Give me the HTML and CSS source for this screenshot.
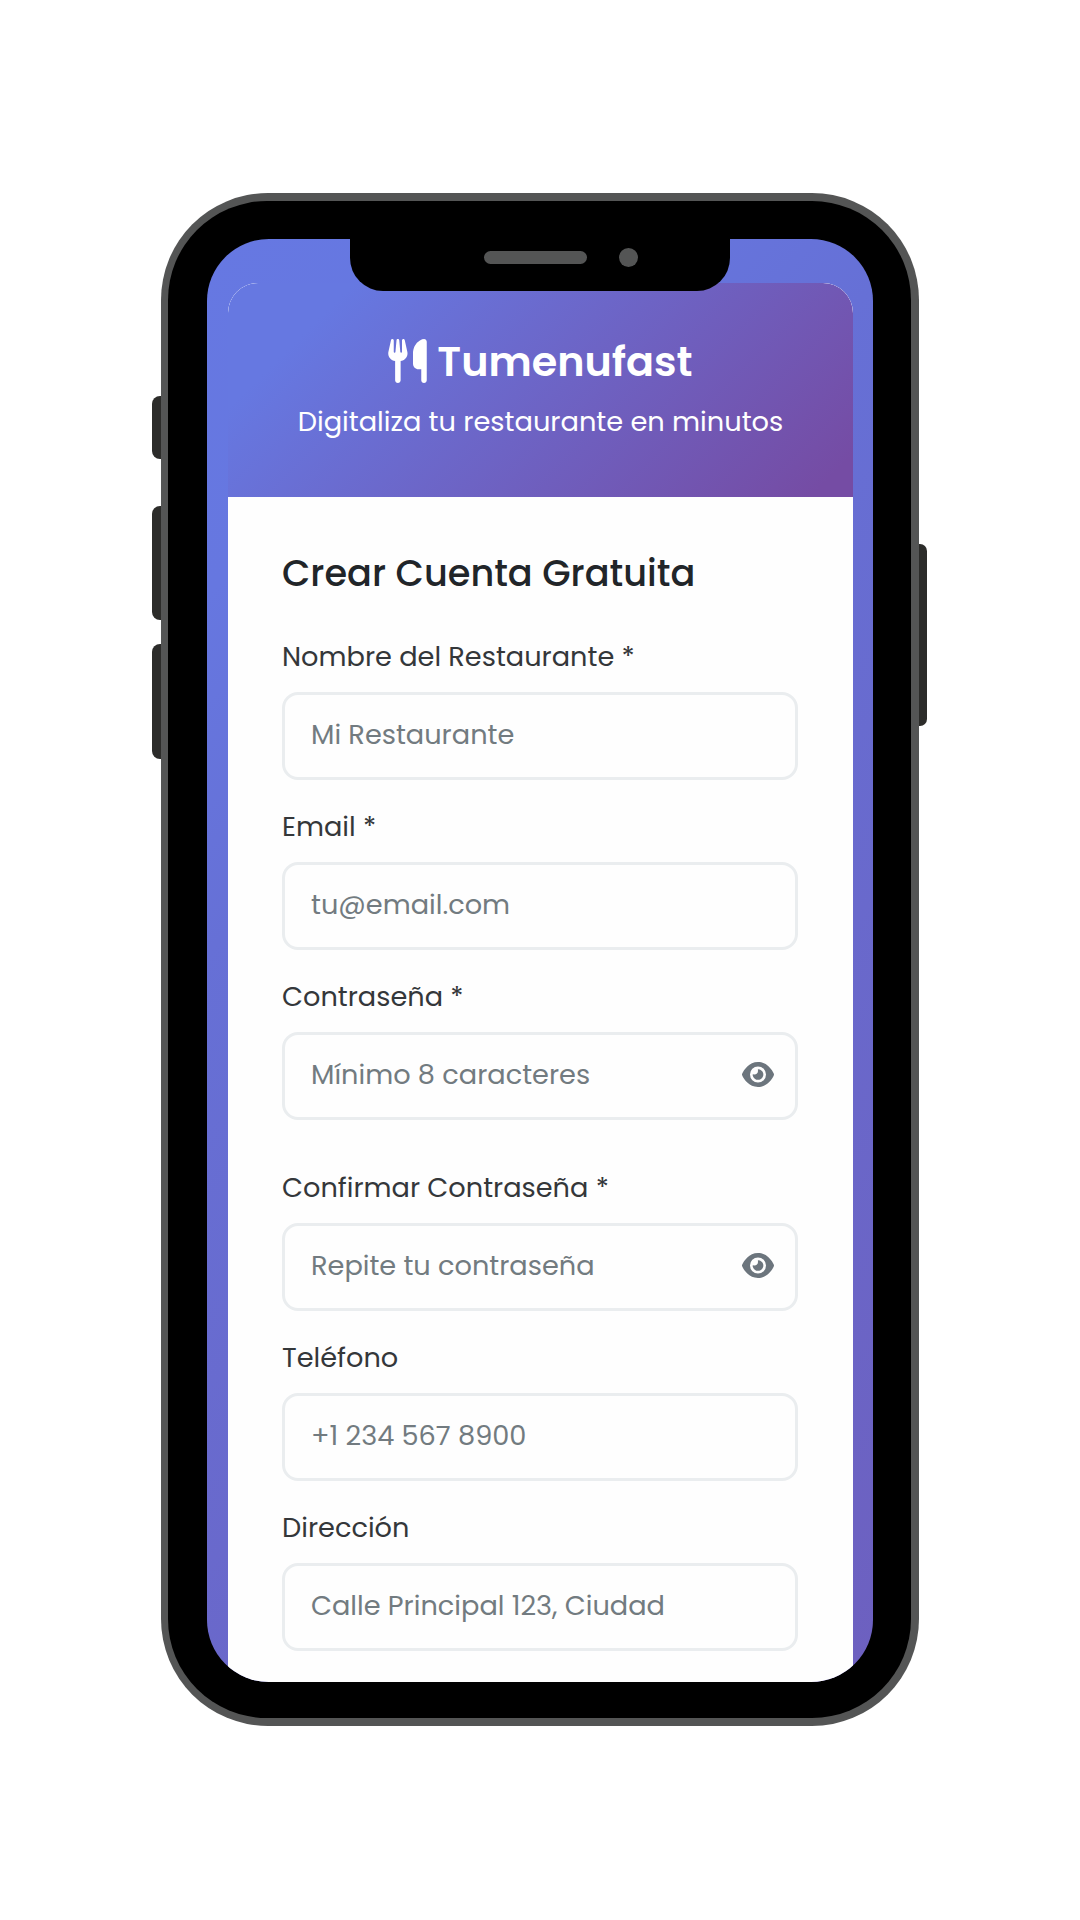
FILE: index.html
```html
<!DOCTYPE html>
<html lang="es">
<head>
<meta charset="utf-8">
<title>Tumenufast</title>
<link rel="stylesheet" href="styles.css">
</head>
<body>
<svg class="sprite" aria-hidden="true">
  <symbol id="eye" viewBox="0 0 576 512"><path d="M288 32c-80.800 0-145.500 36.800-192.600 80.600C48.600 156 17.300 208 2.500 243.700c-3.300 7.900-3.300 16.700 0 24.600C17.300 304 48.600 356 95.400 399.400C142.500 443.200 207.200 480 288 480s145.500-36.800 192.600-80.600c46.800-43.500 78.100-95.400 93-131.100c3.300-7.900 3.300-16.700 0-24.600c-14.900-35.700-46.200-87.700-93-131.100C433.500 68.800 368.800 32 288 32zM144 256a144 144 0 1 1 288 0 144 144 0 1 1 -288 0zm144-64c0 35.300-28.700 64-64 64c-7.100 0-13.900-1.200-20.300-3.300c-5.500-1.800-11.900 1.600-11.700 7.400c.3 6.900 1.300 13.800 3.200 20.700c13.700 51.200 66.400 81.600 117.600 67.900s81.600-66.400 67.900-117.600c-11.100-41.500-47.800-69.400-88.600-71.100c-5.800-.2-9.200 6.100-7.400 11.700c2.100 6.400 3.300 13.200 3.300 20.300z"/></symbol>
  <symbol id="utensils" viewBox="0 0 448 512"><path d="M416 0C400 0 288 32 288 176V288c0 35.300 28.700 64 64 64h32V480c0 17.700 14.300 32 32 32s32-14.300 32-32V352 240 32c0-17.700-14.300-32-32-32zM64 16C64 7.800 57.900 1 49.700 .1S34.200 4.600 32.400 12.500L2.100 148.800C.7 155.100 0 161.500 0 167.900c0 45.900 35.100 83.600 80 87.700V480c0 17.700 14.300 32 32 32s32-14.300 32-32V255.600c44.900-4.100 80-41.800 80-87.700c0-6.400-.7-12.800-2.100-19.100L191.600 12.500c-1.800-8-9.300-13.300-17.400-12.400S160 7.800 160 16V150.200c0 5.400-4.400 9.800-9.800 9.800c-5.100 0-9.300-3.900-9.800-9L127.900 14.600C127.200 6.300 120.300 0 112 0s-15.200 6.300-15.900 14.600L83.700 151c-.5 5.100-4.700 9-9.800 9c-5.400 0-9.800-4.400-9.800-9.800V16z"/></symbol>
</svg>

<div class="phone">
  <span class="key key-mute"></span>
  <span class="key key-up"></span>
  <span class="key key-down"></span>
  <span class="key key-power"></span>
  <div class="bezel">
    <div class="screen">
      <div class="notch"><span class="speaker"></span><span class="camera"></span></div>
      <main class="card">
        <header class="card-header">
          <h1 class="brand"><svg class="brand-icon"><use href="#utensils"/></svg><span>Tumenufast</span></h1>
          <p class="tagline">Digitaliza tu restaurante en minutos</p>
        </header>
        <form class="form">
          <h2 class="form-title">Crear Cuenta Gratuita</h2>
          <div class="field">
            <label class="label" for="name">Nombre del Restaurante *</label>
            <div class="control"><input class="input" id="name" type="text" placeholder="Mi Restaurante"></div>
          </div>
          <div class="field">
            <label class="label" for="email">Email *</label>
            <div class="control"><input class="input" id="email" type="email" placeholder="tu@email.com"></div>
          </div>
          <div class="field field-password">
            <label class="label" for="password">Contraseña *</label>
            <div class="control"><input class="input" id="password" type="password" placeholder="Mínimo 8 caracteres"><svg class="eye"><use href="#eye"/></svg></div>
          </div>
          <div class="field">
            <label class="label" for="confirm">Confirmar Contraseña *</label>
            <div class="control"><input class="input" id="confirm" type="password" placeholder="Repite tu contraseña"><svg class="eye"><use href="#eye"/></svg></div>
          </div>
          <div class="field">
            <label class="label" for="phone">Teléfono</label>
            <div class="control"><input class="input" id="phone" type="tel" placeholder="+1 234 567 8900"></div>
          </div>
          <div class="field">
            <label class="label" for="address">Dirección</label>
            <div class="control"><input class="input" id="address" type="text" placeholder="Calle Principal 123, Ciudad"></div>
          </div>
        </form>
      </main>
    </div>
  </div>
</div>
</body>
</html>
```
FILE: styles.css
```css
* { box-sizing: border-box; }

body {
  margin: 0;
  height: 1920px;
  padding-top: 193px;
  background: #fff;
  font-family: Poppins, Inter, "Open Sans", sans-serif;
  overflow: hidden;
}

.sprite { display: none; }

/* Device */
.phone {
  position: relative;
  width: 758px;
  height: 1533px;
  margin: 0 auto;
  padding: 8px 8px 8px 7px;
  border-radius: 107px;
  background: #545555;
}

.key {
  position: absolute;
  left: -9px;
  width: 9px;
  border-radius: 8px 0 0 8px;
  background: #2c2c2a;
}
.key-mute { top: 203px; height: 63px; }
.key-up { top: 313px; height: 114px; }
.key-down { top: 451px; height: 115px; }
.key-power {
  top: 351px;
  left: auto;
  right: -8px;
  width: 8px;
  height: 182px;
  border-radius: 0 7px 7px 0;
}

.bezel {
  height: 100%;
  padding: 38px 38px 36px 39px;
  border-radius: 99px;
  background: #000;
}

.screen {
  position: relative;
  height: 100%;
  padding: 44px 20px 0 21px;
  border-radius: 62px;
  background: linear-gradient(135deg, #6678e2 0%, #6677e0 10%, #6670d6 20%, #764ba2 110%) 0 0 / 100% 2900px;
  overflow: hidden;
}

.notch {
  position: absolute;
  z-index: 1;
  top: 0;
  left: 143px;
  width: 380px;
  height: 52px;
  border-radius: 0 0 33px 33px;
  background: #000;
  display: flex;
  align-items: center;
  gap: 32px;
  padding: 0 0 15px 134px;
}
.speaker { width: 103px; height: 13px; border-radius: 7px; background: #545555; }
.camera { width: 19px; height: 19px; border-radius: 50%; background: #545555; }

/* Sign-up card */
.card {
  height: 1500px;
  border-radius: 30px 30px 0 0;
  background: #fefefe;
  overflow: hidden;
}

.card-header {
  height: 214px;
  padding-top: 54px;
  border-radius: 30px 30px 0 0;
  background: linear-gradient(135deg, #6678e1 0%, #6678e1 15%, #754ca4 95%);
  color: #fff;
  text-align: center;
}

.brand {
  display: flex;
  justify-content: center;
  align-items: center;
  gap: 10px;
  margin: 0;
  font-size: 41.3px;
  line-height: 50px;
  font-weight: 600;
}
.brand-icon { width: 39px; height: 44px; margin-top: -3px; fill: currentColor; }

.tagline {
  margin: 15px 0 0;
  font-size: 27.25px;
  line-height: 40px;
}

.form { padding: 55px 55px 0 54px; }

.form-title {
  margin: 0 0 43px;
  font-size: 36.7px;
  line-height: 42px;
  font-weight: 500;
  color: #212529;
}

.field { margin-bottom: 26px; }
.field-password { margin-bottom: 47px; }

.label {
  display: block;
  margin-bottom: 15px;
  font-size: 27.2px;
  line-height: 41px;
  color: #34373a;
}
.form-title + .field { margin-top: -1px; }

.control { position: relative; }

.input {
  display: block;
  width: 100%;
  height: 88px;
  padding: 0 26px 2px;
  border: 3px solid #eaedef;
  border-radius: 16px;
  background: #fefefe;
  font: inherit;
  font-size: 27.2px;
  outline: 0;
}
.input::placeholder { color: #727b80; opacity: 1; }

.eye {
  position: absolute;
  right: 24.5px;
  top: 28px;
  width: 32px;
  height: 29px;
  fill: #6c757d;
}
```
